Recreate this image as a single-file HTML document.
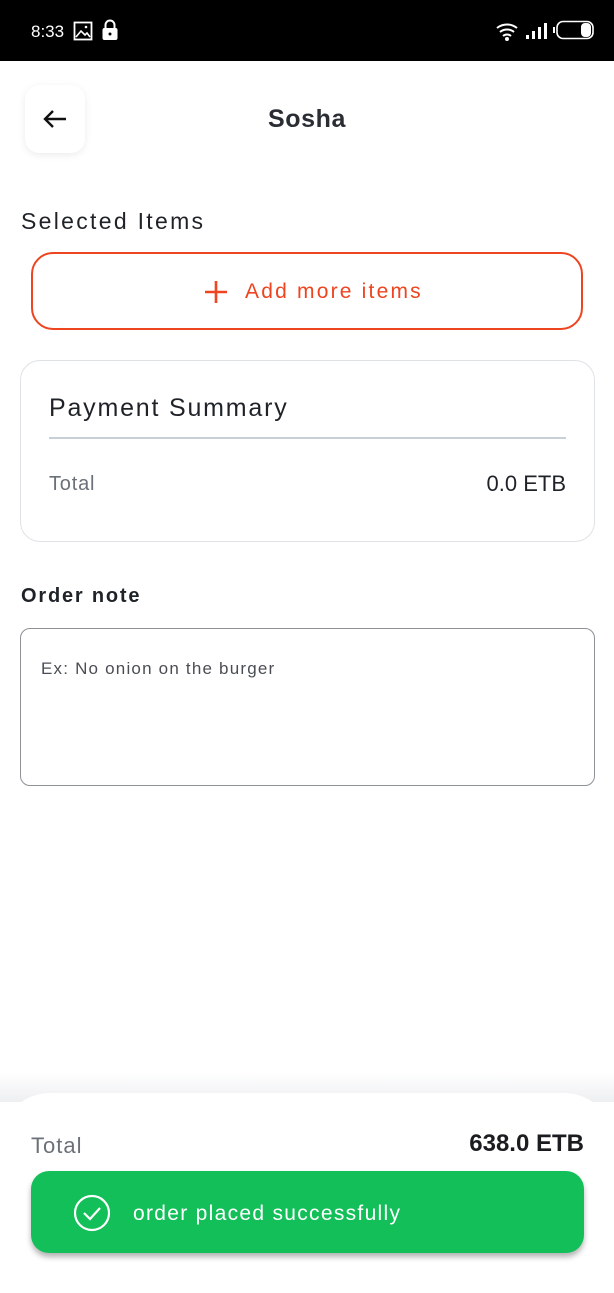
<!DOCTYPE html>
<html><head><meta charset="utf-8"><style>
*{box-sizing:border-box;margin:0;padding:0}
body{width:614px;height:1280px;background:#fff;font-family:"Liberation Sans",sans-serif;position:relative;overflow:hidden;color:#1f2328}
.sb{position:absolute;top:0;left:0;width:614px;height:61px;background:#000;color:#fff}
.abs{position:absolute}
</style></head><body>
<div class="sb">
<div class="abs" style="left:31px;top:22px;font-size:17px">8:33</div>
<svg class="abs" style="left:73px;top:21px" width="20" height="20" viewBox="0 0 20 20"><rect x="1.5" y="1.5" width="17" height="17" fill="none" stroke="#fff" stroke-width="1.8"/><path d="M3 16l5-6 4 4 2-2 3 4" fill="none" stroke="#fff" stroke-width="1.6"/><circle cx="13" cy="6" r="1.3" fill="#fff"/></svg>
<svg class="abs" style="left:101px;top:19px" width="18" height="22" viewBox="0 0 18 22"><path d="M4.5 10V6a4.5 4.5 0 0 1 9 0v4" fill="none" stroke="#fff" stroke-width="2"/><rect x="1.5" y="9" width="15" height="12" rx="2" fill="#fff"/><circle cx="9" cy="15" r="1.5" fill="#000"/></svg>
<svg class="abs" style="left:495px;top:20px" width="26" height="22" viewBox="0 0 26 22"><path d="M2 8a16 16 0 0 1 20 0M5 12a11 11 0 0 1 14 0M8 16a6 6 0 0 1 8 0" fill="none" stroke="#fff" stroke-width="2"/><circle cx="12" cy="19" r="2" fill="#fff"/></svg>
<svg class="abs" style="left:524px;top:22px" width="24" height="18" viewBox="0 0 24 18"><rect x="2" y="13" width="3" height="4" fill="#fff"/><rect x="8" y="9" width="3" height="8" fill="#fff"/><rect x="14" y="5" width="3" height="12" fill="#fff"/><rect x="20" y="1" width="3" height="16" fill="#fff"/></svg>
<svg class="abs" style="left:553px;top:20px" width="42" height="20" viewBox="0 0 42 20"><rect x="4" y="1.5" width="36" height="17" rx="6" fill="none" stroke="#fff" stroke-width="1.6"/><rect x="28" y="3" width="10" height="14" rx="4" fill="#fff"/><rect x="0" y="7" width="2" height="6" fill="#fff"/></svg>
</div>
<div class="abs" style="left:25px;top:85px;width:60px;height:68px;border-radius:14px;background:#fff;box-shadow:0 2px 8px rgba(0,0,0,.08)"></div>
<svg class="abs" style="left:40px;top:105px" width="30" height="30" viewBox="0 0 30 30"><path d="M26 14H5M13 6l-8 8 8 8" fill="none" stroke="#111" stroke-width="2.4"/></svg>
<div class="abs" style="left:0;width:614px;top:105px;text-align:center;font-size:25px;font-weight:bold;color:#2a2d33;letter-spacing:.6px">Sosha</div>
<div class="abs" style="left:21px;top:208px;font-size:23px;color:#1f2328;letter-spacing:2.3px">Selected Items</div>
<div class="abs" style="left:31px;top:252px;width:552px;height:78px;border:2px solid #ee4420;border-radius:22px"></div>
<svg class="abs" style="left:203px;top:279px" width="26" height="26" viewBox="0 0 26 26"><path d="M13 2v22M2 13h22" stroke="#ee4420" stroke-width="2.6"/></svg>
<div class="abs" style="left:245px;top:280px;font-size:21px;color:#ee4420;letter-spacing:2.2px">Add more items</div>
<div class="abs" style="left:20px;top:360px;width:575px;height:182px;border:1.5px solid #dfe2e5;border-radius:20px"></div>
<div class="abs" style="left:49px;top:394px;font-size:25px;color:#1f2328;letter-spacing:1.8px">Payment Summary</div>
<div class="abs" style="left:49px;top:437px;width:517px;height:2px;background:#c9d0d5"></div>
<div class="abs" style="left:49px;top:473px;font-size:20px;color:#6b7178;letter-spacing:.8px">Total</div>
<div class="abs" style="right:48px;top:471px;font-size:22px;color:#1f2328">0.0 ETB</div>
<div class="abs" style="left:21px;top:585px;font-size:20px;font-weight:bold;color:#1f2328;letter-spacing:1.8px">Order note</div>
<div class="abs" style="left:20px;top:628px;width:575px;height:158px;border:1.2px solid #8e9297;border-radius:10px"></div>
<div class="abs" style="left:41px;top:659px;font-size:17px;color:#4a4e54;letter-spacing:1.2px">Ex: No onion on the burger</div>
<div class="abs" style="left:0;top:1072px;width:614px;height:30px;background:linear-gradient(#fff,#eeeff1)"></div>
<div class="abs" style="left:0;top:1093px;width:614px;height:200px;background:#fff;border-radius:50px 50px 0 0"></div>
<div class="abs" style="left:31px;top:1133px;font-size:22px;color:#6b7178;letter-spacing:1px">Total</div>
<div class="abs" style="right:30px;top:1130px;font-size:24px;font-weight:bold;color:#1a1c20">638.0 ETB</div>
<div class="abs" style="left:31px;top:1171px;width:553px;height:82px;background:#12bf58;border-radius:18px;box-shadow:0 4px 6px rgba(0,0,0,.3)"></div>
<svg class="abs" style="left:72px;top:1193px" width="40" height="40" viewBox="0 0 40 40"><circle cx="20" cy="20" r="17" fill="none" stroke="#fff" stroke-width="2.2"/><path d="M12 20l6 6 10-11" fill="none" stroke="#fff" stroke-width="2.2"/></svg>
<div class="abs" style="left:133px;top:1202px;font-size:21px;color:#fff;letter-spacing:1.3px">order placed successfully</div>
</body></html>
